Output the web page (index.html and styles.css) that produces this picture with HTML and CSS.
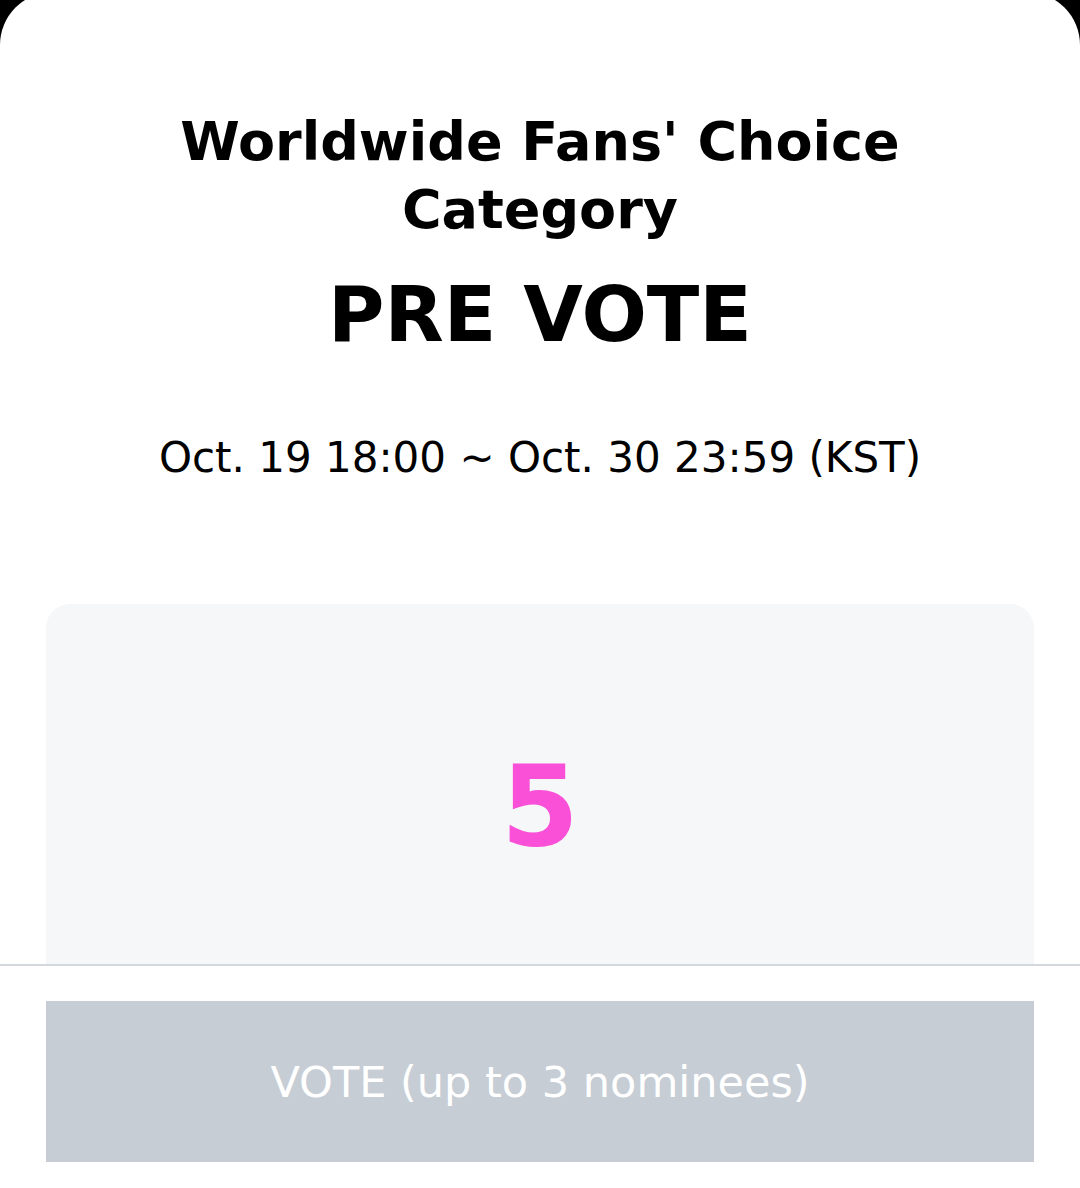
FILE: index.html
```html
<!DOCTYPE html>
<html lang="en">
<head>
    <meta charset="UTF-8">
    <meta name="viewport" content="width=device-width, initial-scale=1.0">
    <title>Pre Vote</title>
    <link rel="stylesheet" href="styles.css">
</head>
<body>
    <div class="sheet">
        <div class="content">
            <h1 class="title">Worldwide Fans' Choice Category</h1>
            <h2 class="stage">PRE VOTE</h2>
            <p class="period">Oct. 19 18:00 ~ Oct. 30 23:59 (KST)</p>

            <div class="card">
                <div class="count">5</div>
            </div>
        </div>

        <div class="footer">
            <button class="vote-btn" disabled>VOTE (up to 3 nominees)</button>
        </div>
    </div>
</body>
</html>
```

FILE: styles.css
```css
*, *::before, *::after{
    margin: 0;
    padding: 0;
    box-sizing: border-box;
}

html, body{
    height: 100%;
}
body{
    background-color: #000;
    font-family: "DejaVu Sans", sans-serif;
    color: #000;
    overflow: hidden;
}

.sheet{
    background-color: #fff;
    margin-top: -8px;
    height: calc(100vh + 8px);
    border-radius: 53px 53px 0 0;
    display: flex;
    flex-direction: column;
}

.content{
    flex: 1;
    min-height: 0;
    display: flex;
    flex-direction: column;
    text-align: center;
    padding-top: 116px;
    overflow: hidden;
}
.title{
    font-size: 54px;
    line-height: 68px;
    font-weight: 700;
    padding: 0 150px;
}
.stage{
    margin-top: 26px;
    font-size: 77px;
    line-height: 90px;
    font-weight: 700;
}
.period{
    margin-top: 70px;
    font-size: 42px;
    line-height: 56px;
}

.card{
    flex: 1;
    margin: 118px 46px 0;
    background-color: #f6f7f9;
    border-radius: 24px 24px 0 0;
    padding-top: 137px;
}
.count{
    font-size: 112px;
    line-height: 130px;
    font-weight: 700;
    color: #fa4fd7;
}

.footer{
    border-top: 2px solid #d3d8de;
    padding: 35px 46px 26px;
}
.vote-btn{
    display: block;
    width: 100%;
    height: 161px;
    border: 0;
    outline: 0;
    background-color: #c6cdd5;
    color: #fff;
    font-family: "DejaVu Sans", sans-serif;
    font-size: 43px;
}
```
